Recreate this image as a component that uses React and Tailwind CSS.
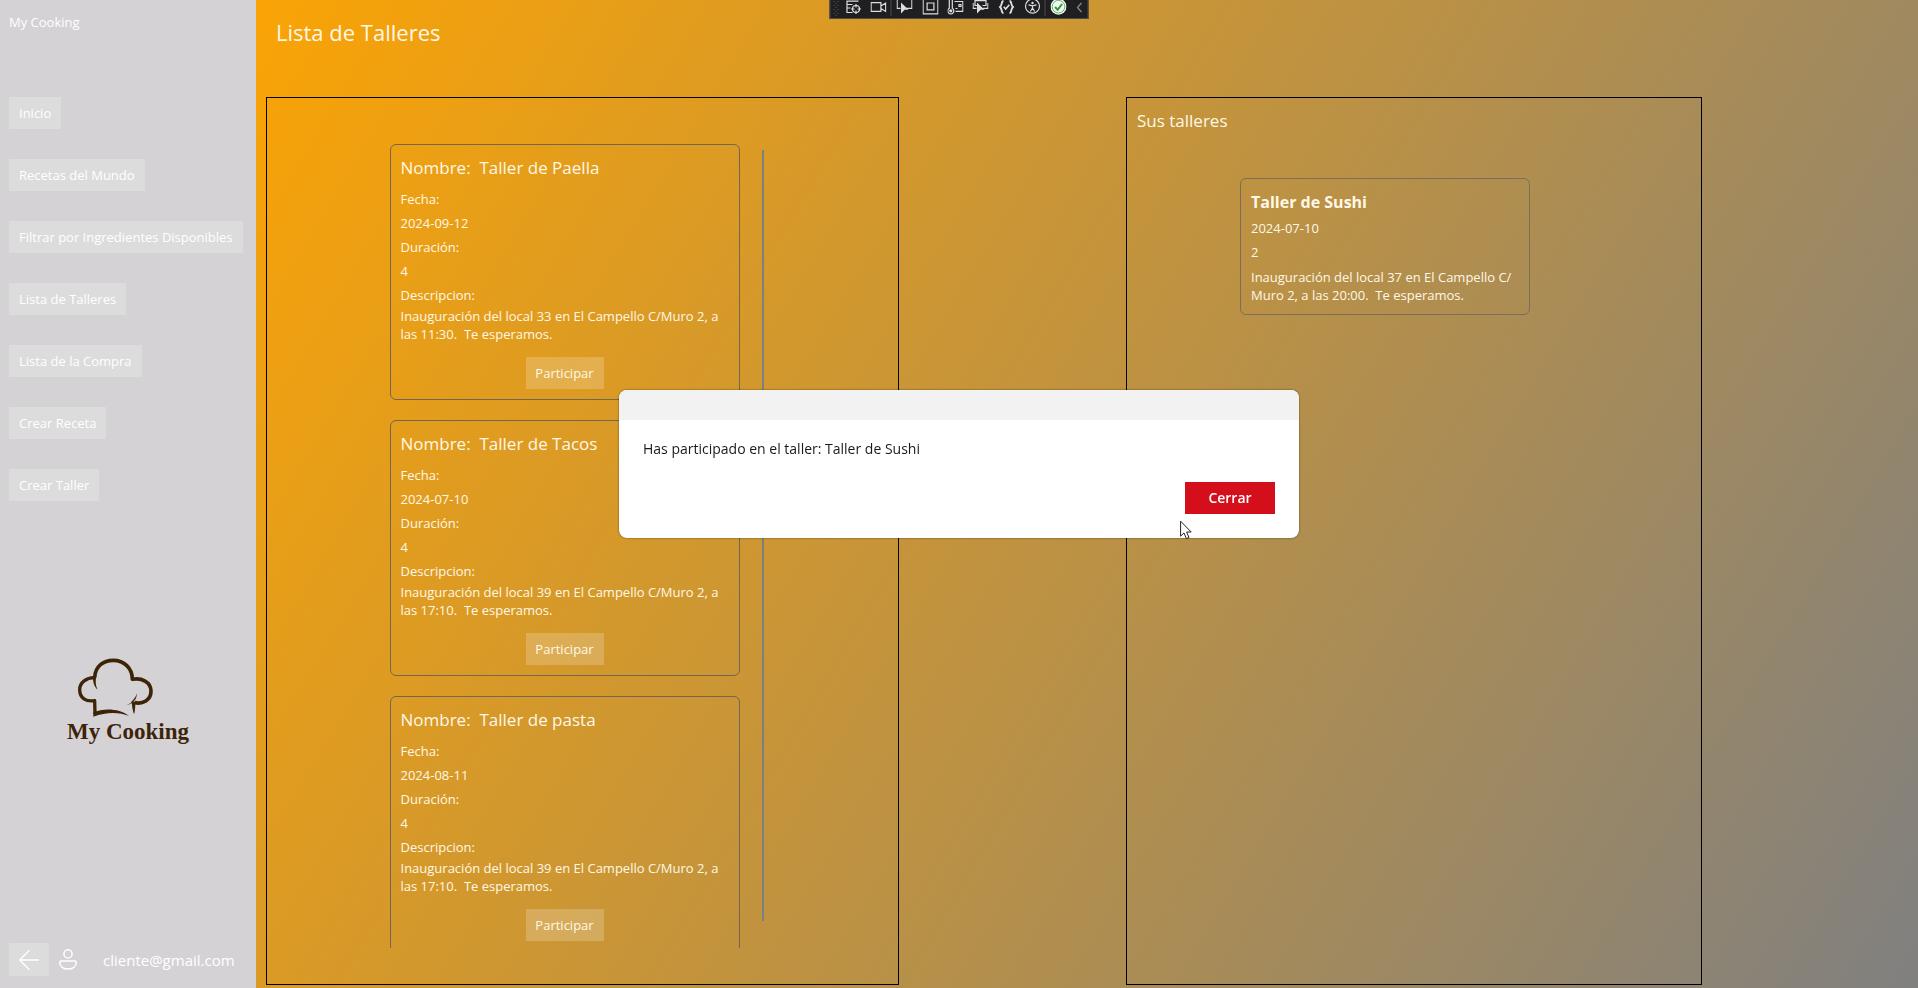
const navItems = [
  "Inicio",
  "Recetas del Mundo",
  "Filtrar por Ingredientes Disponibles",
  "Lista de Talleres",
  "Lista de la Compra",
  "Crear Receta",
  "Crear Taller",
];

const workshops = [
  {
    name: "Taller de Paella",
    date: "2024-09-12",
    duration: "4",
    description: ["Inauguración del local 33 en El Campello C/Muro 2, a", "las 11:30.  Te esperamos."],
  },
  {
    name: "Taller de Tacos",
    date: "2024-07-10",
    duration: "4",
    description: ["Inauguración del local 39 en El Campello C/Muro 2, a", "las 17:10.  Te esperamos."],
  },
  {
    name: "Taller de pasta",
    date: "2024-08-11",
    duration: "4",
    description: ["Inauguración del local 39 en El Campello C/Muro 2, a", "las 17:10.  Te esperamos."],
  },
];

const joined = [
  {
    name: "Taller de Sushi",
    date: "2024-07-10",
    duration: "2",
    description: ["Inauguración del local 37 en El Campello C/", "Muro 2, a las 20:00.  Te esperamos."],
  },
];

function Description({ lines }) {
  return lines.map((line) => (
    <span key={line} className="block whitespace-pre">
      {line}
    </span>
  ));
}

function Logo() {
  return (
    <div className="mt-[157px] flex flex-col self-center text-[#3d2408]">
      <svg className="ml-2.5 h-[60px] w-[76px]" viewBox="84 54 228 180" fill="none" stroke="currentColor" strokeLinejoin="round" aria-hidden="true">
        <path d="M137 112 C139 78 163 61 193 61 C225 61 250 84 250 118 C277 112 306 126 306 153 C306 181 281 193 257 188" strokeWidth="11" />
        <path d="M137 113 C113 112 92 128 92 149 C92 174 111 186 137 182 L138 222" strokeWidth="10" />
        <path d="M132 108 L142 108 C139 124 139 136 146 149 C135 140 131 124 132 108 Z" fill="currentColor" stroke="none" />
        <path d="M264 160 C263 176 256 191 231 196 C243 191 247 188 250 182 C257 176 261 169 264 160 Z" fill="currentColor" stroke="none" />
        <path d="M248 184 L259 186 C259 202 258 214 255 223 C251 213 249 200 248 184 Z" fill="currentColor" stroke="none" />
        <path d="M133 230 L133 217 C162 204 212 204 240 228 C210 216 172 216 133 230 Z" fill="currentColor" stroke="none" />
      </svg>
      <span className="font-['Liberation_Serif',serif] text-[23px] leading-7 font-bold">My Cooking</span>
    </div>
  );
}

function Sidebar() {
  return (
    <aside className="flex w-64 shrink-0 flex-col bg-[#d4d2d5] px-[9px] py-3 text-white">
      <p className="text-[13px] leading-5">My Cooking</p>
      <nav className="mt-[65px] flex flex-col items-start gap-[30px]">
        {navItems.map((item) => (
          <button key={item} className="h-8 bg-[#dcdcdc] px-[10px] text-[13px] leading-5 whitespace-nowrap">
            {item}
          </button>
        ))}
      </nav>
      <Logo />
      <div className="mt-auto flex items-center">
        <button aria-label="Volver" className="flex h-[33px] w-10 items-center justify-center bg-[#dcdcdc]">
          <svg className="h-5 w-5" viewBox="0 0 20 20" fill="none" stroke="currentColor" strokeWidth="1.3" strokeLinecap="round" strokeLinejoin="round">
            <path d="M19.5 10H1M10 .8L.8 10L10 19.2" />
          </svg>
        </button>
        <svg className="ml-2.5 h-[21px] w-[18px]" viewBox="0 0 18 21" fill="none" stroke="currentColor" strokeWidth="1.5" aria-hidden="true">
          <circle cx="9" cy="4.9" r="4.1" />
          <path d="M2.4 12h13.2c1 0 1.6.7 1.6 1.6 0 4-3.6 6.4-8.2 6.4S.8 17.600 .8 13.600C.8 12.700 1.400 12 2.400 12Z" />
        </svg>
        <span className="ml-[26px] text-[15px] leading-5">cliente@gmail.com</span>
      </div>
    </aside>
  );
}

function WorkshopCard({ workshop }) {
  return (
    <article className="rounded-md border border-[#746650] p-2.5 text-[13px]">
      <h2 className="mt-px mb-[7px] text-[17px] leading-6 whitespace-pre">{"Nombre:  " + workshop.name}</h2>
      <p className="leading-6">Fecha:</p>
      <p className="leading-6">{workshop.date}</p>
      <p className="leading-6">Duración:</p>
      <p className="leading-6">{workshop.duration}</p>
      <p className="leading-6">Descripcion:</p>
      <p className="leading-[18px]">
        <Description lines={workshop.description} />
      </p>
      <button className="mx-auto mt-3.5 block h-8 w-[78px] bg-white/20 leading-5">Participar</button>
    </article>
  );
}

function JoinedCard({ workshop }) {
  return (
    <article className="w-[290px] rounded-md border border-[#7c6e5c] p-2.5 text-[13px]">
      <h3 className="mt-px mb-0.5 text-base leading-6 font-bold">{workshop.name}</h3>
      <p className="leading-6">{workshop.date}</p>
      <p className="leading-6">{workshop.duration}</p>
      <p className="mt-1 leading-[18px]">
        <Description lines={workshop.description} />
      </p>
    </article>
  );
}

function ToolButton({ label, className, children }) {
  return (
    <button aria-label={label} className={"flex shrink-0 justify-center " + className}>
      <svg className="h-4 w-4" viewBox="0 0 16 16" fill="none" stroke="currentColor" strokeWidth="1.2">
        {children}
      </svg>
    </button>
  );
}

function DebugToolbar() {
  return (
    <div className="fixed top-0 left-1/2 flex h-[19px] -translate-x-1/2 overflow-hidden border border-t-0 border-[#4a4a50] bg-[#1f1f22] text-[#dedede]">
      <svg className="h-[18px] w-[11px]" viewBox="0 0 11 18" fill="#5a5a5a" aria-hidden="true">
        {[1, 5, 9, 13].map((y) => (
          <g key={y}>
            <rect x="3" y={y} width="1" height="1" />
            <rect x="7" y={y} width="1" height="1" />
            <rect x="5" y={y + 2} width="1" height="1" />
          </g>
        ))}
      </svg>
      <ToolButton label="Árbol visual" className="w-6">
        <path d="M1 1.200H13M1 4.500H7M1 8H5M1 12.500H7M1.500 1V13" />
        <circle cx="10.500" cy="9" r="3.500" />
        <path d="M10.500 4v3.500M10.500 10.500V14M5.500 9H9M12 9h3.500" />
      </ToolButton>
      <ToolButton label="Cámara" className="w-[25px]">
        <path d="M.6 2.600H10.400V11.400H.6ZM10.400 6L15.200 3V11.500L10.400 8.500" />
      </ToolButton>
      <span className="h-4 w-px bg-[#4a4a4a]" />
      <ToolButton label="Seleccionar elemento" className="w-[26px]">
        <path d="M.6 0V8.400H4M9.500 8.400H15.400V0" />
        <path d="M4.500 2.500L12 9.800H8.200L4.500 13.500Z" fill="currentColor" stroke="none" />
      </ToolButton>
      <ToolButton label="Adornos de diseño" className="w-[26px]">
        <path d="M.6-1H15.400V13.800H.6ZM4.600 3H11.400V9.800H4.600Z" />
      </ToolButton>
      <ToolButton label="Rendimiento" className="w-6">
        <path d="M1.800 0V8.300a3 3 0 1 0 3 0V0M7 1.500H15.400V11.400H8M11.500 4.500h2v2h-2zM8 8.500h2" />
        <circle cx="3.300" cy="10.800" r="1.600" fill="currentColor" stroke="none" />
      </ToolButton>
      <ToolButton label="Enfocar elemento" className="w-[26px]">
        <path d="M2.500 0V5.500H5M13.500 0V5.500H10M2.500 .6H13.500M.6 3V8.400H4M10.500 8.400H15.400V3" />
        <path d="M4.500 2.500L12 9.800H8.200L4.500 13.500Z" fill="currentColor" stroke="none" />
      </ToolButton>
      <ToolButton label="Recarga activa" className="w-[26px]">
        <path d="M5 1C2.500 1 4 5 1.500 7C4 9 2.500 13 5 13M11 1C13.500 1 12 5 14.500 7C12 9 13.500 13 11 13" strokeWidth="1.900" />
        <path d="M5.200 6.800L7.200 9L10.800 4.800" strokeWidth="1.600" />
      </ToolButton>
      <ToolButton label="Accesibilidad" className="w-[25px]">
        <circle cx="8" cy="6.200" r="7" />
        <path d="M4 4.800L8 5.800L12 4.800M8 5.800V8L5.800 11.500M8 8L10.200 11.500" />
        <circle cx="8" cy="3" r="1.200" fill="currentColor" stroke="none" />
      </ToolButton>
      <span className="h-4 w-px bg-[#4a4a4a]" />
      <ToolButton label="Sin errores de enlace" className="w-[26px]">
        <circle cx="8" cy="6.700" r="8" fill="#f4f8f2" stroke="none" />
        <circle cx="8" cy="6.700" r="6.300" stroke="#5cb567" strokeWidth="1" />
        <path d="M4.500 7L7.200 9.700L11.600 4" stroke="#2e9a3a" strokeWidth="2" />
      </ToolButton>
      <ToolButton label="Contraer" className="w-4">
        <path d="M10 3L6 7.500L10 12" stroke="#8a8a8a" />
      </ToolButton>
    </div>
  );
}

function Dialog() {
  return (
    <div className="fixed inset-0 flex items-center justify-center pb-[60px]">
      <div role="dialog" aria-label="Taller" className="relative w-full max-w-[680px] rounded-lg bg-white text-[#1a1a1a] shadow-[0_0_2px_rgba(0,0,0,0.6)]">
        <div className="h-[30px] rounded-t-lg bg-[#f3f2f2]" />
        <div className="flex flex-col px-6 pt-[18px] pb-6">
          <p className="text-sm leading-[22px]">Has participado en el taller: Taller de Sushi</p>
          <button className="mt-[22px] h-8 w-[90px] self-end bg-[#d40e1a] text-sm leading-5 font-semibold text-white">Cerrar</button>
        </div>
        <svg className="absolute right-[107px] -bottom-0.5 h-5 w-3" viewBox="0 0 12 20" fill="#fff" stroke="#222" strokeWidth="1" aria-hidden="true">
          <path d="M.6 1.200V16.200L4 12.900L6.400 18.600L9 17.500L6.600 12H11.200Z" />
        </svg>
      </div>
    </div>
  );
}

export default function App() {
  return (
    <div className="flex h-screen font-['Open_Sans','Noto_Sans',sans-serif]">
      <Sidebar />
      <main className="flex min-w-0 flex-1 flex-col bg-[linear-gradient(120.7deg,#ffa500_-4%,#808080)] pb-[3px] pl-2.5 text-[#fff8e6]">
        <h1 className="mb-[49px] pt-4 pl-2.5 text-[22px] leading-8">Lista de Talleres</h1>
        <div className="grid min-h-0 flex-1 grid-cols-[633fr_227fr_576fr_216fr] grid-rows-[minmax(0,1fr)]">
          <section className="flex justify-center border border-black pt-[46px] pb-9">
            <div className="flex w-[386px] gap-[22px] overflow-hidden pr-3">
              <div className="flex w-[350px] flex-col gap-5">
                {workshops.map((w) => (
                  <WorkshopCard key={w.name} workshop={w} />
                ))}
              </div>
              <div className="mt-1.5 mb-[27px] w-0.5 bg-[#7d7f80]" />
            </div>
          </section>
          <section className="col-start-3 flex flex-col border border-black">
            <h2 className="pt-[11px] pl-2.5 text-[17px] leading-6">Sus talleres</h2>
            <div className="mt-[45px] flex flex-col items-center pr-[58px]">
              {joined.map((w) => (
                <JoinedCard key={w.name} workshop={w} />
              ))}
            </div>
          </section>
        </div>
      </main>
      <DebugToolbar />
      <Dialog />
    </div>
  );
}
